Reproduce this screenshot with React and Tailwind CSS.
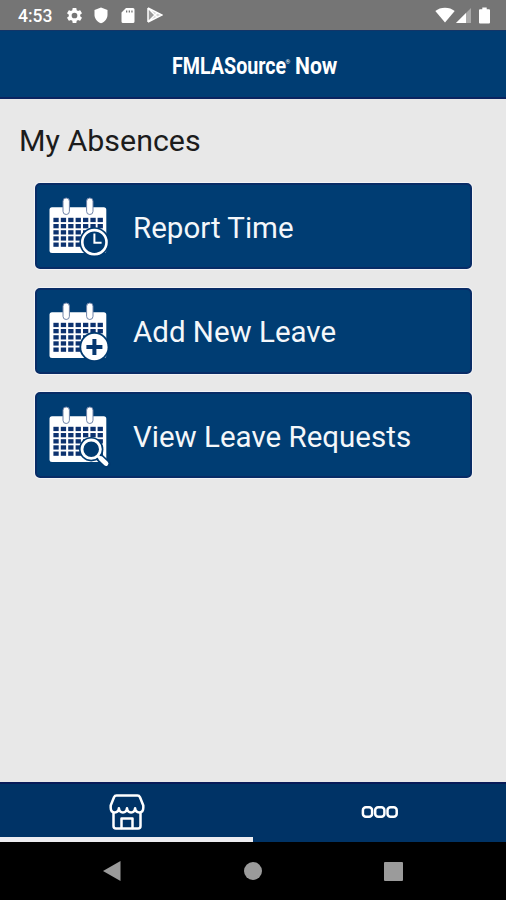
import { useState } from 'react';

const CELL_X = [18.4, 25.8, 33.2, 40.6, 48, 55.4, 62.6];
const CELL_Y = [34.8, 41, 47.2, 53.3, 59.5];

function CalendarIcon({ children }) {
  return (
    <svg viewBox="0 0 80 86" className="w-20 h-[86px] shrink-0" fill="none">
      <rect x="14.5" y="24.3" width="56.8" height="45.6" rx="2.5" fill="#fff" />
      {CELL_Y.map((y) =>
        CELL_X.map((x) => (
          <rect key={`${x}-${y}`} x={x} y={y} width="5.3" height="4.3" fill="#0d326f" />
        ))
      )}
      {[28, 51.6].map((x) => (
        <rect key={x} x={x} y="15" width="6.4" height="16.5" rx="3.2" fill="#fff" stroke="#6f83a8" strokeWidth="1" />
      ))}
      {children}
    </svg>
  );
}

function ClockBadge() {
  return (
    <>
      <circle cx="59.4" cy="59.2" r="15" fill="#003a70" />
      <circle cx="59.4" cy="59.2" r="12.1" fill="#003a70" stroke="#fff" strokeWidth="2.6" />
      <path d="M59.4 50.5v9.2h7.2" stroke="#fff" strokeWidth="2" />
    </>
  );
}

function PlusBadge() {
  return (
    <>
      <circle cx="59.4" cy="59" r="15" fill="#003a70" />
      <circle cx="59.4" cy="59" r="13.2" fill="#fff" />
      <path d="M59.4 51v16M51.4 59h16" stroke="#073870" strokeWidth="4" />
    </>
  );
}

function SearchBadge() {
  return (
    <>
      <path d="M63.5 64.5l8 7.5" stroke="#003a70" strokeWidth="8" strokeLinecap="round" />
      <circle cx="56.2" cy="57.2" r="12.2" fill="#003a70" />
      <circle cx="56.2" cy="57.2" r="9.2" fill="#003a70" stroke="#fff" strokeWidth="2.8" />
      <path d="M62.8 64l1.8 1.7" stroke="#fff" strokeWidth="2.8" />
      <path d="M65.8 66.5l5.2 5" stroke="#fff" strokeWidth="4.8" strokeLinecap="round" />
    </>
  );
}

const ACTIONS = [
  { label: 'Report Time',         Badge: ClockBadge },
  { label: 'Add New Leave',       Badge: PlusBadge },
  { label: 'View Leave Requests', Badge: SearchBadge },
];

function StatusBar() {
  return (
    <div className="h-[30px] bg-[#757575] flex items-center justify-between pl-[18px] pr-[16px] text-white">
      <div className="flex items-center">
        <span className="w-[48px] pt-[1px] text-[17.5px] leading-[30px] font-medium">4:53</span>
        <svg viewBox="0 0 24 24" className="size-[19px] -ml-[1px]" fill="currentColor">
          <path d="M19.14 12.94c.04-.3.06-.61.06-.94 0-.32-.02-.64-.07-.94l2.03-1.58a.49.49 0 0 0 .12-.61l-1.92-3.32a.49.49 0 0 0-.59-.22l-2.39.96a7 7 0 0 0-1.62-.94l-.36-2.54a.48.48 0 0 0-.48-.41h-3.84c-.24 0-.43.17-.47.41l-.36 2.54c-.59.24-1.13.57-1.62.94l-2.39-.96a.49.49 0 0 0-.59.22L2.74 8.87c-.12.21-.08.47.12.61l2.03 1.58c-.05.3-.09.63-.09.94s.02.64.07.94l-2.03 1.58a.49.49 0 0 0-.12.61l1.92 3.32c.12.22.37.29.59.22l2.39-.96c.5.38 1.03.7 1.62.94l.36 2.54c.05.24.24.41.48.41h3.84c.24 0 .44-.17.47-.41l.36-2.54c.59-.24 1.13-.56 1.62-.94l2.39.96c.22.08.47 0 .59-.22l1.92-3.32a.49.49 0 0 0-.12-.61zM12 15.6a3.6 3.6 0 1 1 0-7.2 3.6 3.6 0 0 1 0 7.2z" />
        </svg>
        <svg viewBox="0 0 14 17" className="w-[14px] h-[17px] ml-[10px]" fill="currentColor">
          <path d="M7 .5L13.5 3v4.8c0 3.9-2.7 7.2-6.5 8.5C3.2 15 .5 11.7.5 7.8V3z" />
        </svg>
        <svg viewBox="0 0 14 17" className="w-[14px] h-[17px] ml-[13px]" fill="currentColor">
          <path fillRule="evenodd" d="M5 1h7a1.5 1.5 0 0 1 1.5 1.5v12A1.5 1.5 0 0 1 12 16H2A1.5 1.5 0 0 1 .5 14.5V5.5zM5 3.5v2h1.3v-2zM7.7 3.5v2H9v-2zM10.3 3.5v2h1.3v-2z" />
        </svg>
        <svg viewBox="0 0 16 16" className="size-4 ml-[12px]">
          <path d="M1 1l14 7-14 7z" fill="#d2d2d2" />
          <path d="M1 1l8 7-8 7z" fill="#9a9a9a" />
          <path d="M1 1l14 7-14 7M1 1v14M2 2l8 8M2 14l8-8" fill="none" stroke="#fff" strokeWidth="1.5" />
        </svg>
      </div>
      <div className="flex items-center">
        <svg viewBox="0 0 20 16" className="w-5 h-4" fill="currentColor">
          <path d="M.3 4C2.8 1.9 6.2.7 10 .7S17.2 1.9 19.7 4L10 15.5z" />
        </svg>
        <svg viewBox="0 0 15 15" className="size-[15px] ml-[1px]">
          <path d="M15 0v15H0z" fill="#a9a9a9" />
          <path d="M10 5v10H0z" fill="#fff" />
        </svg>
        <svg viewBox="0 0 11 17" className="w-[11px] h-[17px] ml-[8px]" fill="currentColor">
          <path d="M3.3.5h4.4v1.7H10a1 1 0 0 1 1 1v12.3a1 1 0 0 1-1 1H1a1 1 0 0 1-1-1V3.2a1 1 0 0 1 1-1h2.3z" />
        </svg>
      </div>
    </div>
  );
}

function Header() {
  return (
    <header className="h-[69px] bg-[#003d73] border-t border-[#123568] border-b-2 border-b-[#0b2460] pt-[22px] pl-[171.5px]">
      <h1 className="flex text-[23px] leading-7 font-bold text-white whitespace-nowrap">
        <span className="w-[114px] origin-left scale-x-[0.855]">FMLASource</span>
        <span className="w-[9px] text-[6px] leading-[17px]">®</span>
        <span className="w-[42px] origin-left scale-x-[0.92]">Now</span>
      </h1>
    </header>
  );
}

function ActionCard({ label, Badge }) {
  return (
    <button className="w-[437px] h-[86px] rounded-[5px] bg-[#003d73] border-2 border-[#082c66] ring-1 ring-[#f3f3f5] flex items-center text-left">
      <span className="-ml-[2px]">
        <CalendarIcon>
          <Badge />
        </CalendarIcon>
      </span>
      <span className="ml-[18px] pt-[3px] text-[29.5px] leading-10 text-[#f4f7fa] whitespace-nowrap">{label}</span>
    </button>
  );
}

function StoreIcon() {
  return (
    <svg viewBox="0 0 36 36" className="size-9" fill="none" stroke="#fff" strokeWidth="2.5" strokeLinejoin="round" strokeLinecap="round">
      <path d="M7.5 1.5h21c1.2 0 2 .6 2.5 1.7l3.3 8.3v2.3c0 3-1.7 4.7-4 4.7-2.3 0-4-1.7-4.2-4.3-.3 2.6-1.7 4.3-4 4.3s-3.8-1.7-4.1-4.3c-.3 2.6-1.8 4.3-4.1 4.3s-3.7-1.7-4-4.3c-.2 2.6-1.9 4.3-4.2 4.3s-4-1.7-4-4.7v-2.3L5 3.2c.5-1.1 1.3-1.7 2.5-1.7z" />
      <path d="M4.5 19v13c0 1.5 1 2.5 2.5 2.5h22c1.5 0 2.5-1 2.5-2.5V19" />
      <path d="M12.5 34v-9.5h11V34" />
    </svg>
  );
}

function TabBar({ active, onChange }) {
  return (
    <nav className="h-[60px] bg-[#003366] border-t-2 border-[#081b58] grid grid-cols-2">
      <button onClick={() => onChange(0)} aria-label="Home" className="flex flex-col items-center pt-[10px]">
        <StoreIcon />
        <span className={`mt-auto w-full h-[5px] ${active === 0 ? 'bg-[#ededf1]' : ''}`} />
      </button>
      <button onClick={() => onChange(1)} aria-label="More" className="flex flex-col items-center pt-[22px]">
        <svg viewBox="0 0 37 12" className="w-[37px] h-3" fill="none" stroke="#fff" strokeWidth="2.5">
          {[1.9, 14.2, 26.5].map((x) => (
            <rect key={x} x={x} y="1.3" width="9.2" height="9.4" rx="3" />
          ))}
        </svg>
        <span className={`mt-auto w-full h-[5px] ${active === 1 ? 'bg-[#ededf1]' : ''}`} />
      </button>
    </nav>
  );
}

function SystemNav() {
  return (
    <div className="h-[58px] bg-black flex items-center justify-between pl-[101px] pr-[103px]">
      <svg viewBox="0 0 20 20" className="size-5" fill="#9b9b9b">
        <path d="M2 10L19.5 0v20z" />
      </svg>
      <span className="size-[18px] rounded-full bg-[#9b9b9b]" />
      <span className="size-[19px] rounded-[1px] bg-[#9b9b9b]" />
    </div>
  );
}

export default function App() {
  const [tab, setTab] = useState(0);

  return (
    <div className="w-[506px] h-[900px] flex flex-col bg-[#e8e8e8] overflow-hidden font-[Roboto,sans-serif]">
      <StatusBar />
      <Header />
      <main className="flex-1">
        <h2 className="pt-[22px] pl-[19px] text-[30.4px] leading-10 text-[#1c1c1c]">My Absences</h2>
        <div className="mt-[22px] pl-[35px] flex flex-col gap-[18.5px]">
          {ACTIONS.map((a) => (
            <ActionCard key={a.label} {...a} />
          ))}
        </div>
      </main>
      <TabBar active={tab} onChange={setTab} />
      <SystemNav />
    </div>
  );
}
